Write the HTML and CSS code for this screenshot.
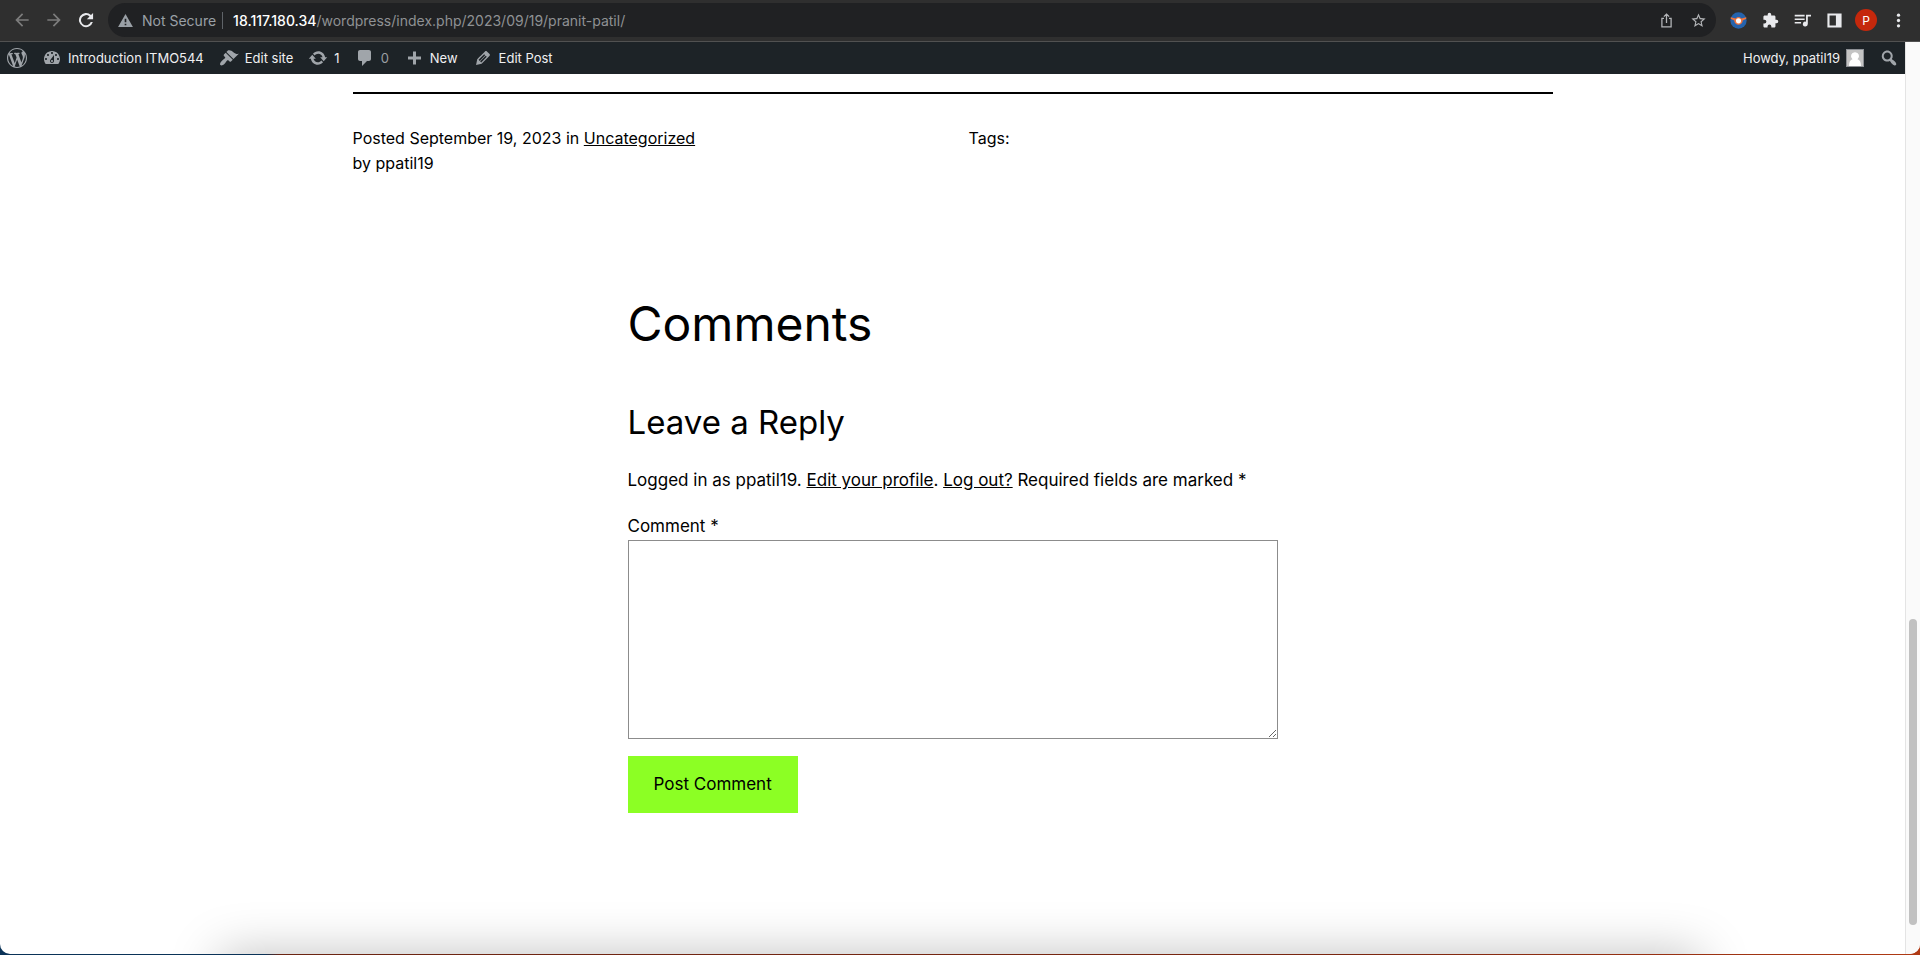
FILE: index.html
```html
<!DOCTYPE html>
<html lang="en">
<head>
<meta charset="utf-8">
<meta name="viewport" content="width=device-width, initial-scale=1">
<title>pranit-patil – Introduction ITMO544</title>
<link rel="stylesheet" href="styles.css">
</head>
<body>
<div class="window">
  <header class="toolbar">
    <div class="nav-buttons">
      <button class="tool dim" type="button" aria-label="Back"><svg viewBox="0 0 24 24"><path d="M20 11H7.830l5.590-5.590L12 4l-8 8 8 8 1.410-1.410L7.830 13H20z"/></svg></button>
      <button class="tool dim" type="button" aria-label="Forward"><svg viewBox="0 0 24 24"><path d="M4 11h12.170l-5.590-5.590L12 4l8 8-8 8-1.410-1.410L16.170 13H4z"/></svg></button>
      <button class="tool" type="button" aria-label="Reload"><svg viewBox="0 0 24 24"><path d="M18 6A8.500 8.500 0 1 0 20.200 14.500h-2.500A6.100 6.100 0 1 1 16.200 7.800L13 11h7.500V3.500z"/></svg></button>
    </div>
    <div class="omnibox">
      <button class="security" type="button"><svg class="warning" viewBox="0 0 16 14"><path fill-rule="evenodd" d="M8 0l8 14H0zM7.100 5v4h1.800V5zM7.100 10.400v1.800h1.800v-1.800z"/></svg>Not Secure</button>
      <div class="address" role="textbox" aria-label="Address"><span class="host">18.117.180.34</span>/wordpress/index.php/2023/09/19/pranit-patil/</div>
      <button class="tool soft" type="button" aria-label="Share"><svg viewBox="0 0 24 24"><path fill="none" stroke="currentColor" stroke-width="1.800" d="M8.500 9H5.500v12h13V9h-3M12 15.500V3M8.300 6.500L12 2.900l3.700 3.600"/></svg></button>
      <button class="tool soft" type="button" aria-label="Bookmark"><svg viewBox="0 0 24 24"><path d="M22 9.240l-7.190-.62L12 2 9.190 8.630 2 9.240l5.460 4.730L5.820 21 12 17.270 18.180 21l-1.630-7.030zM12 15.400l-3.760 2.270 1-4.280-3.320-2.880 4.380-.38L12 6.100l1.710 4.040 4.380.38-3.320 2.880 1 4.280z"/></svg></button>
    </div>
    <div class="extensions">
      <button class="tool" type="button" aria-label="Extension"><svg viewBox="0 0 24 24"><circle cx="12" cy="12" r="11.500" fill="#2563ad"/><path d="M1 7.500L8 9a6 6 0 0 1 8 0l7-1.500v2L18 12a6 6 0 0 1-12 0L1 9.500z" fill="#f1743c"/><circle cx="12" cy="12.500" r="3.600" fill="#fff"/></svg></button>
      <button class="tool" type="button" aria-label="Extensions"><svg viewBox="0 0 24 24"><path d="M20.500 11H19V7c0-1.100-.9-2-2-2h-4V3.500a2.500 2.500 0 0 0-5 0V5H4c-1.100 0-2 .9-2 2v3.800h1.500a2.700 2.700 0 0 1 0 5.400H2V20c0 1.100.9 2 2 2h3.800v-1.500a2.700 2.700 0 0 1 5.400 0V22H17c1.100 0 2-.9 2-2v-4h1.500a2.500 2.500 0 0 0 0-5z"/></svg></button>
      <button class="tool" type="button" aria-label="Media"><svg viewBox="0 0 24 24"><path d="M1 4h14v2.200H1zM1 9h14v2.200H1zM1 14h9v2.200H1zM17 4h7v2.400h-4.500V17a3.500 3.500 0 1 1-2.500-3.400z"/></svg></button>
      <button class="tool" type="button" aria-label="Side panel"><svg viewBox="0 0 24 24"><path fill-rule="evenodd" d="M2 2h20v20H2zM5 5v14h9V5z"/></svg></button>
      <button class="profile" type="button" aria-label="Profile">P</button>
      <button class="tool" type="button" aria-label="Menu"><svg viewBox="0 0 24 24"><circle cx="12" cy="4.500" r="2.300"/><circle cx="12" cy="12" r="2.300"/><circle cx="12" cy="19.500" r="2.300"/></svg></button>
    </div>
  </header>

  <div class="viewport">
    <div class="page">
      <nav class="adminbar" aria-label="Toolbar">
        <a class="bar-item" href="#" aria-label="About WordPress"><svg viewBox="0 0 20 20"><path d="M20 10c0-5.510-4.490-10-10-10C4.480 0 0 4.490 0 10c0 5.520 4.480 10 10 10 5.510 0 10-4.480 10-10zM7.780 15.370L4.370 6.220c.55-.02 1.170-.08 1.170-.08.5-.06.44-1.130-.06-1.110 0 0-1.450.11-2.370.11-.18 0-.37 0-.58-.01C4.120 2.690 6.870 1.110 10 1.110c2.330 0 4.450.87 6.050 2.340-.68-.11-1.650.39-1.650 1.580 0 .74.45 1.360.9 2.100.35.61.55 1.360.55 2.460 0 1.490-1.400 5-1.400 5l-3.030-8.370c.54-.02.82-.17.82-.17.5-.05.44-1.250-.06-1.220 0 0-1.440.12-2.380.12-.87 0-2.330-.12-2.330-.12-.5-.03-.56 1.200-.06 1.220l.92.08 1.260 3.410zM17.410 10c.24-.64.74-1.870.43-4.250.7 1.290 1.050 2.710 1.050 4.250 0 3.290-1.730 6.240-4.400 7.780.97-2.590 1.940-5.200 2.920-7.780zM6.100 18.090C3.120 16.650 1.110 13.530 1.110 10c0-1.300.23-2.480.72-3.590C3.250 10.300 4.670 14.200 6.100 18.090zm4.030-6.630l2.580 6.980c-.86.29-1.760.45-2.710.45-.79 0-1.570-.11-2.290-.33.81-2.380 1.620-4.740 2.420-7.100z"/></svg></a>
        <a class="bar-item" href="#"><svg viewBox="0 0 20 20"><path fill-rule="evenodd" d="M3.760 16h12.480c1.100-1.370 1.760-3.110 1.760-5 0-4.420-3.580-8-8-8s-8 3.580-8 8c0 1.890.66 3.630 1.760 5zM10 4c.55 0 1 .45 1 1s-.45 1-1 1-1-.45-1-1 .45-1 1-1zM6 6c.55 0 1 .45 1 1s-.45 1-1 1-1-.45-1-1 .45-1 1-1zm8 0c.55 0 1 .45 1 1s-.45 1-1 1-1-.45-1-1 .45-1 1-1zm-5.370 5.550L12 7v6c0 1.100-.9 2-2 2s-2-.9-2-2c0-.57.24-1.080.63-1.450zM4 10c.55 0 1 .45 1 1s-.45 1-1 1-1-.45-1-1 .45-1 1-1zm12 0c.55 0 1 .45 1 1s-.45 1-1 1-1-.45-1-1 .45-1 1-1zm-5 3c0-.55-.45-1-1-1s-1 .45-1 1 .45 1 1 1 1-.45 1-1z"/></svg>Introduction ITMO544</a>
        <a class="bar-item" href="#"><svg viewBox="0 0 20 20"><path d="M14.480 11.060L7.410 3.990l1.500-1.500c.5-.56 2.300-.47 3.510.32 1.210.8 1.430 1.280 2.910 2.100 1.180.64 2.450 1.260 4.450.85zm-.71.71L6.700 4.700 4.930 6.470c-.39.39-.39 1.020 0 1.410l1.060 1.060c.39.39.39 1.030 0 1.420-.6.6-1.430 1.110-2.210 1.690-.35.26-.7.53-1.010.84C1.430 14.230.4 16.080 1.400 17.070c.99 1 2.840-.03 4.180-1.360.31-.31.58-.66.85-1.020.57-.78 1.080-1.610 1.690-2.210.39-.39 1.020-.39 1.410 0l1.060 1.060c.39.39 1.020.39 1.410 0z"/></svg>Edit site</a>
        <a class="bar-item" href="#"><svg viewBox="0 0 20 20"><path d="M10.200 3.280c3.530 0 6.430 2.610 6.920 6h2.080l-3.500 4-3.500-4h2.320c-.45-1.970-2.210-3.450-4.320-3.450-1.450 0-2.730.71-3.540 1.780L4.950 5.660C6.230 4.200 8.110 3.280 10.200 3.280zm-.4 13.440c-3.520 0-6.430-2.610-6.920-6H.8l3.500-4c1.170 1.330 2.330 2.670 3.500 4H5.480c.45 1.970 2.210 3.450 4.320 3.450 1.450 0 2.730-.71 3.540-1.780l1.710 1.950c-1.280 1.460-3.150 2.380-5.250 2.380z"/></svg>1</a>
        <a class="bar-item none" href="#"><svg viewBox="0 0 20 20"><path d="M5 2h9c1.100 0 2 .9 2 2v7c0 1.100-.9 2-2 2h-2l-5 5v-5H5c-1.100 0-2-.9-2-2V4c0-1.100.9-2 2-2z"/></svg>0</a>
        <a class="bar-item" href="#"><svg viewBox="0 0 20 20"><path d="M17 8.500v3h-5v5H9v-5H4v-3h5v-5h3v5z"/></svg>New</a>
        <a class="bar-item" href="#"><svg viewBox="0 0 20 20"><path d="M13.890 3.390l2.710 2.720c.46.46.42 1.240.03 1.640l-8.010 8.020-5.560 1.160 1.160-5.580s7.600-7.630 7.990-8.030c.39-.39 1.220-.39 1.680.07zm-2.730 2.790l-5.590 5.610 1.110 1.110 5.540-5.650zm-2.970 8.230l5.580-5.600-1.070-1.080-5.590 5.600z"/></svg>Edit Post</a>
        <a class="bar-item account" href="#">Howdy, ppatil19<svg class="avatar" viewBox="0 0 18 18"><path fill="#8c8f94" d="M0 0h18v18H0z"/><path fill="#c4c4c4" d="M1 1h16v16H1z"/><path fill="#fff" d="M9 3.200a3.900 3.900 0 0 1 2.500 7c2.200.6 3.500 2.600 3.500 6.800H3c0-4.200 1.300-6.200 3.500-6.800a3.900 3.900 0 0 1 2.500-7z"/></svg></a>
        <button class="bar-item" type="button" aria-label="Search"><svg viewBox="0 0 20 20"><path d="M12.140 4.180c1.870 1.870 2.110 4.750.72 6.890.12.1.22.21.36.31.2.16.47.36.81.59.34.24.56.39.66.47.42.31.73.57.94.78.32.32.6.65.84 1 .25.35.44.69.59 1.040.14.35.21.68.18 1-.02.32-.14.59-.36.81s-.49.34-.81.36c-.31.02-.65-.04-.99-.19-.35-.14-.7-.34-1.040-.59-.35-.24-.68-.52-1-.84-.21-.21-.47-.52-.77-.93-.1-.13-.25-.35-.47-.66-.22-.32-.4-.57-.56-.78-.16-.2-.29-.35-.44-.5-2.070 1.090-4.690.76-6.440-.98-2.140-2.150-2.140-5.640 0-7.780 2.150-2.150 5.630-2.150 7.780 0zm-1.410 6.360c1.360-1.370 1.360-3.580 0-4.950-1.370-1.370-3.590-1.370-4.950 0-1.370 1.370-1.370 3.580 0 4.950 1.360 1.370 3.580 1.370 4.950 0z"/></svg></button>
      </nav>

      <main class="content">
        <section class="post-meta">
          <p>Posted September 19, 2023 in <a href="#">Uncategorized</a><br>by ppatil19</p>
          <p>Tags:</p>
        </section>
        <section class="comments">
          <h2>Comments</h2>
          <h3>Leave a Reply</h3>
          <form class="reply">
            <p class="logged-in">Logged in as ppatil19. <a href="#">Edit your profile</a>. <a href="#">Log out?</a> Required fields are marked *</p>
            <label for="comment">Comment *</label>
            <textarea id="comment" rows="8" required></textarea>
            <button class="submit" type="submit">Post Comment</button>
          </form>
        </section>
      </main>
    </div>
    <div class="scrollbar" aria-hidden="true"><div class="thumb"></div></div>
  </div>
  <div class="dock-shadow" aria-hidden="true"></div>
</div>
</body>
</html>
```

FILE: styles.css
```css
* {
  box-sizing: border-box;
}

body {
  margin: 0;
  background: linear-gradient(90deg, #0b3358 0, #0b3358 265px, #6b2412 280px, #7a2610 70%, #b03a14 100%);
  color: #000;
  font-family: Inter, "Liberation Sans", sans-serif;
}

button {
  border: 0;
  padding: 0;
  background: none;
  color: inherit;
  font: inherit;
}

a {
  color: inherit;
}

svg {
  display: block;
  fill: currentColor;
}

.window {
  position: relative;
  display: flex;
  flex-direction: column;
  min-height: calc(100vh - 1px);
  margin-bottom: 1px;
  border-radius: 0 0 10px 10px;
  background: #fff;
  overflow: hidden;
}

/* Browser toolbar */
.toolbar {
  display: flex;
  align-items: center;
  gap: 6px;
  padding: 3px 6px 4px;
  border-bottom: 1px solid #515151;
  background: #2f2f2f;
  color: #e9eaed;
}

.nav-buttons,
.extensions {
  display: flex;
  align-items: center;
}

.tool {
  display: grid;
  place-items: center;
  width: 32px;
  height: 32px;
}

.tool svg {
  width: 17px;
  height: 17px;
}

.nav-buttons svg {
  width: 20px;
  height: 20px;
}

.dim {
  color: #7c7c7c;
}

.soft {
  color: #b4b6b9;
}

.omnibox {
  flex: 1;
  display: flex;
  align-items: center;
  height: 34px;
  padding: 0 2px 0 10px;
  border-radius: 17px;
  background: #202123;
  font-size: 14px;
}

.security {
  display: flex;
  align-items: center;
  gap: 9px;
  padding-right: 6px;
  border-right: 1px solid #5f6368;
  color: #9aa0a6;
}

.warning {
  width: 15px;
  height: 13px;
}

.address {
  flex: 1;
  padding-left: 10px;
  color: #8f9194;
}

.host {
  color: #fff;
  font-weight: 500;
}

.profile {
  width: 22px;
  height: 22px;
  margin: 0 5px;
  border-radius: 50%;
  background: #c5280c;
  color: #fff;
  font-size: 12px;
}

/* Page and its scrollbar */
.viewport {
  flex: 1;
  display: flex;
}

.page {
  flex: 1;
}

.scrollbar {
  display: flex;
  flex-direction: column;
  justify-content: flex-end;
  width: 15px;
  padding: 0 3px 29px;
  border-left: 1px solid #e4e4e4;
  background: #fafafa;
}

.thumb {
  height: 306px;
  border-radius: 4px;
  background: #c1c1c1;
}

/* Admin bar */
.adminbar {
  display: flex;
  align-items: center;
  gap: 15px;
  height: 32px;
  padding: 0 6px 0 7px;
  background: #1d2327;
  color: #f0f0f1;
  font-size: 13px;
}

.bar-item {
  display: flex;
  align-items: center;
  gap: 6px;
  text-decoration: none;
}

.bar-item svg {
  width: 20px;
  height: 20px;
  color: #a0a5aa;
}

.bar-item .avatar {
  width: 18px;
  height: 18px;
}

.none {
  color: #9a9ea2;
}

.account {
  margin-left: auto;
}

/* Post content */
.content {
  padding: 18px 24px 130px;
}

.post-meta {
  display: grid;
  grid-template-columns: 1fr 1fr;
  gap: 32px;
  max-width: 1200px;
  margin: 0 auto;
  padding-top: 32px;
  border-top: 2px solid #000;
  font-size: 16px;
  line-height: 25px;
}

.post-meta p {
  margin: 0;
}

.comments {
  max-width: 650px;
  margin: 112px auto 0;
}

.comments h2,
.comments h3 {
  margin: 0;
  font-weight: 400;
}

.comments h2 {
  font-size: 48px;
  line-height: 72px;
}

.comments h3 {
  margin-top: 36px;
  font-size: 33px;
  line-height: 52px;
}

.reply {
  display: flex;
  flex-direction: column;
  align-items: flex-start;
  font-size: 17px;
  line-height: 28px;
}

.logged-in {
  margin: 18px 0;
}

.reply textarea {
  width: 100%;
  height: 199px;
  border: 1px solid #8c8c8c;
  border-radius: 0;
  padding: 16px;
  font: inherit;
  resize: vertical;
}

.submit {
  margin-top: 17px;
  padding: 14px 26px 15px;
  background: #8cff24;
}

/* Soft shade above the dock, over the page's lower edge */
.dock-shadow {
  position: absolute;
  right: 220px;
  bottom: -80px;
  left: 220px;
  height: 80px;
  box-shadow: 0 0 50px rgba(0, 0, 0, 0.25);
  pointer-events: none;
}
```
